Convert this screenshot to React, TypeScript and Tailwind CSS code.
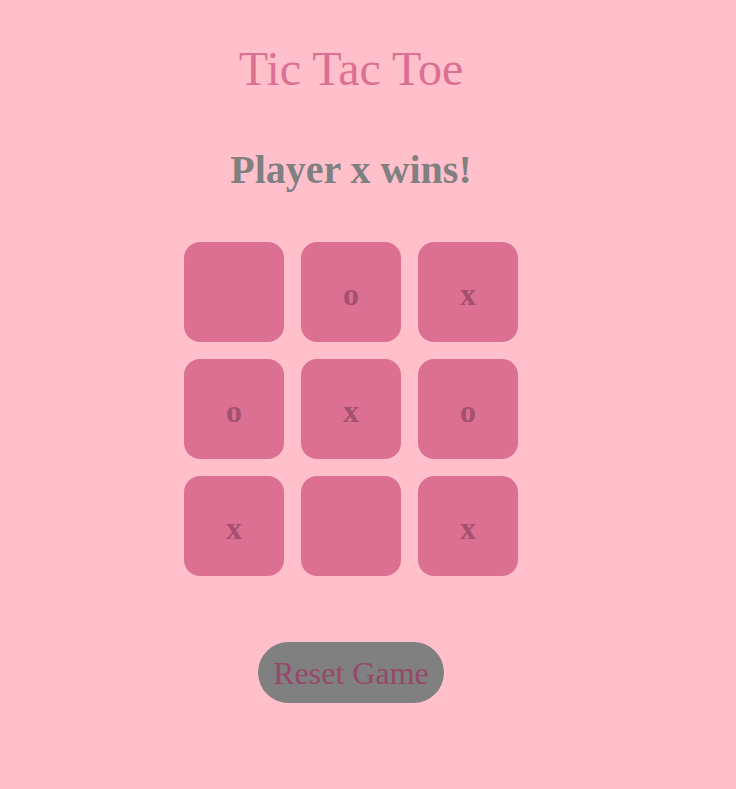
import React from "react";

const board = ["", "o", "x", "o", "x", "o", "x", "", "x"];

export default function App() {
  return (
    <div className="min-h-screen bg-[#ffc0cb] font-['Liberation_Serif',serif]">
      <div className="w-[702px] flex flex-col items-center pt-[41px]">
        <h1 className="text-[48px] leading-[56px] text-[#db7093]">Tic Tac Toe</h1>
        <h2 className="mt-[50px] text-[40px] leading-[46px] font-bold text-[#808080]">
          Player x wins!
        </h2>
        <div className="mt-[49px] grid grid-cols-3 gap-[17px]">
          {board.map((v, i) => (
            <div
              key={i}
              className="w-[100px] h-[100px] rounded-[16px] bg-[#db7093] flex items-center justify-center pt-[4px] text-[32px] font-bold text-[#a4506f]"
            >
              {v}
            </div>
          ))}
        </div>
        <button className="mt-[66px] h-[61px] px-[15px] rounded-full bg-[#808080] text-[32px] text-[#97476a]">
          Reset Game
        </button>
      </div>
    </div>
  );
}
